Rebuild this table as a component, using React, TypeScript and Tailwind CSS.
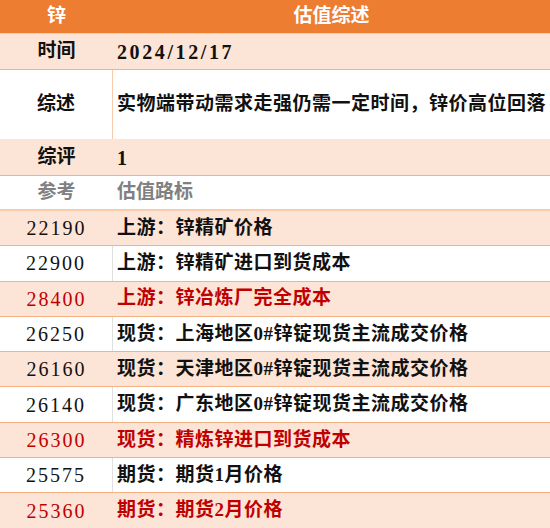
import React from "react";

type Row = { num: string; text: string; red?: boolean; peach: boolean };

const rows: Row[] = [
  { num: "22190", text: "上游：锌精矿价格", peach: true },
  { num: "22900", text: "上游：锌精矿进口到货成本", peach: false },
  { num: "28400", text: "上游：锌冶炼厂完全成本", red: true, peach: true },
  { num: "26250", text: "现货：上海地区0#锌锭现货主流成交价格", peach: false },
  { num: "26160", text: "现货：天津地区0#锌锭现货主流成交价格", peach: true },
  { num: "26140", text: "现货：广东地区0#锌锭现货主流成交价格", peach: false },
  { num: "26300", text: "现货：精炼锌进口到货成本", red: true, peach: true },
  { num: "25575", text: "期货：期货1月价格", peach: false },
  { num: "25360", text: "期货：期货2月价格", red: true, peach: true },
];

const font = {
  fontFamily: '"Liberation Serif", "Noto Sans CJK SC", serif',
};

export default function App() {
  return (
    <div
      className="w-[550px] h-[528px] overflow-hidden bg-white text-[19px] font-bold text-[#111]"
      style={font}
    >
      <div className="flex h-[34px] bg-[#ED7D31] text-white border-b border-[#F8CBAD]">
        <div className="w-[113px] flex items-center justify-center">锌</div>
        <div className="flex-1 flex items-center justify-center">估值综述</div>
      </div>
      <div className="flex h-[36px] bg-[#FCE4D6] border-b border-[#F4B183]">
        <div className="w-[113px] flex items-center justify-center">时间</div>
        <div className="flex-1 flex items-center pl-[4px] text-[20px] tracking-[2.6px]">2024/12/17</div>
      </div>
      <div className="flex h-[70px] bg-white border-b border-[#FCE4D6]">
        <div className="w-[113px] flex items-center justify-center border-r border-[#F8CBAD]">综述</div>
        <div className="flex-1 flex items-center pl-[4px] whitespace-nowrap tracking-[0.5px]">
          实物端带动需求走强仍需一定时间，锌价高位回落
        </div>
      </div>
      <div className="flex h-[36px] bg-[#FCE4D6] border-b border-[#F4B183]">
        <div className="w-[113px] flex items-center justify-center">综评</div>
        <div className="flex-1 flex items-center pl-[4px] text-[20px]">1</div>
      </div>
      <div className="flex h-[35px] bg-white border-b-2 border-[#F8CBAD] text-[#808080]">
        <div className="w-[113px] flex items-center justify-center">参考</div>
        <div className="flex-1 flex items-center pl-[4px]">估值路标</div>
      </div>
      {rows.map((r, i) => (
        <div
          key={i}
          className={
            "flex h-[35.3px] border-b border-[#F4B183] " +
            (r.peach ? "bg-[#FCE4D6] " : "bg-white ") +
            (r.red ? "text-[#C00000]" : "text-[#111]")
          }
        >
          <div
            className={
              "w-[113px] flex items-center justify-center tracking-[2px] font-normal text-[20px] " +
              (r.peach ? "" : "border-r border-[#E0E0E0]")
            }
          >
            {r.num}
          </div>
          <div className="flex-1 flex items-center pl-[4px] whitespace-nowrap tracking-[0.5px]">
            {r.text}
          </div>
        </div>
      ))}
    </div>
  );
}
